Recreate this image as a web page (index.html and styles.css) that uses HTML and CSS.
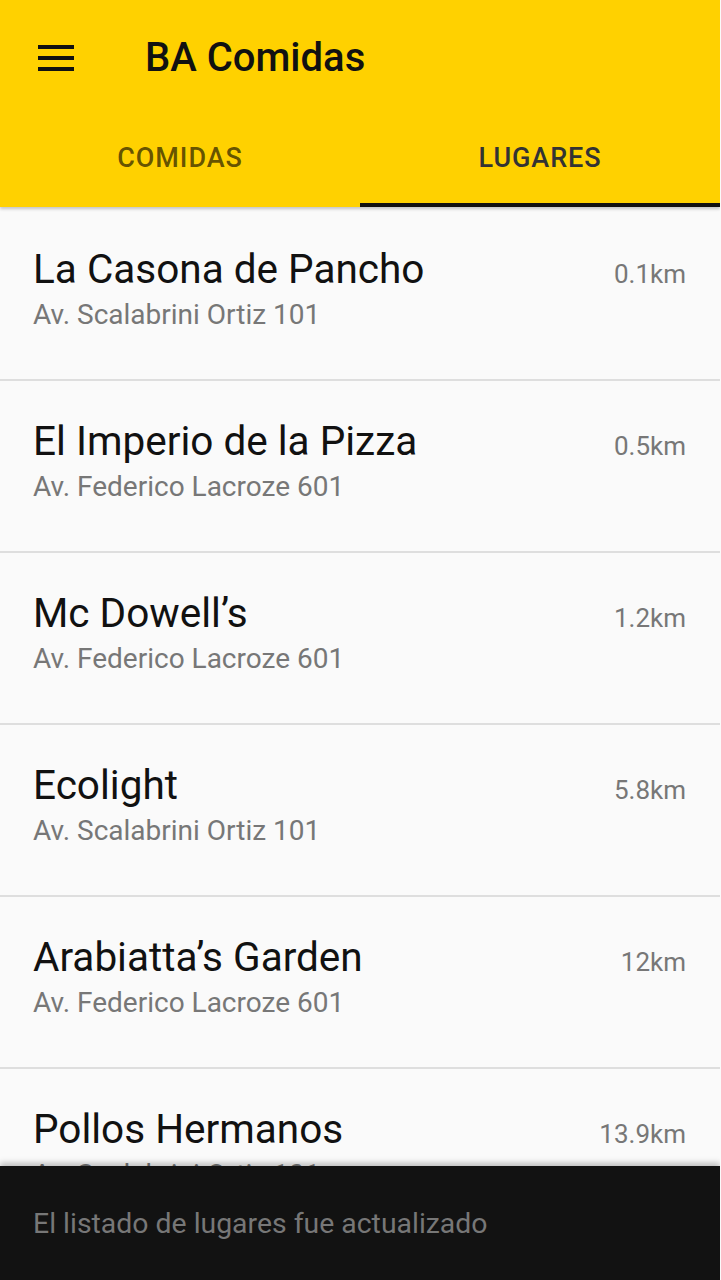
FILE: index.html
```html
<!DOCTYPE html>
<html lang="es">
<head>
<meta charset="utf-8">
<title>BA Comidas</title>
<link rel="stylesheet" href="styles.css">
</head>
<body>
<div class="screen">
  <header class="appbar">
    <div class="toolbar">
      <button class="menu-btn" aria-label="Menú">
        <svg width="36" height="26" viewBox="0 0 36 26"><rect x="0" y="0" width="36" height="4" fill="#111"/><rect x="0" y="11" width="36" height="4" fill="#111"/><rect x="0" y="22" width="36" height="4" fill="#111"/></svg>
      </button>
      <h1 class="title">BA Comidas</h1>
    </div>
    <nav class="tabs">
      <div class="tab">COMIDAS</div>
      <div class="tab active">LUGARES</div>
    </nav>
  </header>
  <ul class="list">
    <li class="item"><div class="row"><span class="name">La Casona de Pancho</span><span class="dist">0.1km</span></div><div class="addr">Av. Scalabrini Ortiz 101</div></li>
    <li class="item"><div class="row"><span class="name">El Imperio de la Pizza</span><span class="dist">0.5km</span></div><div class="addr">Av. Federico Lacroze 601</div></li>
    <li class="item"><div class="row"><span class="name">Mc Dowell’s</span><span class="dist">1.2km</span></div><div class="addr">Av. Federico Lacroze 601</div></li>
    <li class="item"><div class="row"><span class="name">Ecolight</span><span class="dist">5.8km</span></div><div class="addr">Av. Scalabrini Ortiz 101</div></li>
    <li class="item"><div class="row"><span class="name">Arabiatta’s Garden</span><span class="dist">12km</span></div><div class="addr">Av. Federico Lacroze 601</div></li>
    <li class="item"><div class="row"><span class="name">Pollos Hermanos</span><span class="dist">13.9km</span></div><div class="addr">Av. Scalabrini Ortiz 101</div></li>
  </ul>
  <div class="snackbar">El listado de lugares fue actualizado</div>
</div>
</body>
</html>
```
FILE: styles.css
```css
html, body {
  margin: 0;
  padding: 0;
  background: #fafafa;
}
body {
  font-family: Roboto, "Noto Sans", sans-serif;
  overflow: hidden;
  height: 1280px;
}
.screen {
  width: 720px;
  height: 1280px;
  position: relative;
  overflow: hidden;
  background: #fafafa;
}
.appbar {
  background: #ffd100;
  box-shadow: 0 2px 3px rgba(0,0,0,0.22);
  position: relative;
  z-index: 2;
}
.toolbar {
  height: 116px;
  display: flex;
  align-items: center;
}
.menu-btn {
  border: 0;
  background: none;
  padding: 0;
  margin-left: 38px;
  width: 36px;
  height: 26px;
  display: flex;
}
.title {
  margin: 0 0 0 71px;
  font-size: 40px;
  font-weight: 500;
  color: #111;
  line-height: 48px;
}
.tabs {
  display: flex;
  height: 91px;
}
.tab {
  flex: 1;
  display: flex;
  align-items: center;
  justify-content: center;
  font-size: 27px;
  font-weight: 500;
  letter-spacing: 0.9px;
  color: rgba(0,0,0,0.62);
  border-bottom: 4px solid transparent;
  padding-bottom: 3px;
}
.tab.active {
  color: #333;
  border-bottom-color: #111;
}
.list {
  list-style: none;
  margin: 0;
  padding: 2px 0 0;
}
.item {
  box-sizing: border-box;
  height: 172px;
  border-bottom: 2px solid #dedede;
  padding: 36px 34px 0 33px;
}
.row {
  display: flex;
  justify-content: space-between;
  align-items: baseline;
}
.name {
  font-size: 40.5px;
  color: #111;
  line-height: 48px;
}
.dist {
  font-size: 26px;
  color: #777;
}
.addr {
  font-size: 28px;
  color: #777;
  line-height: 44px;
}
.snackbar {
  position: absolute;
  left: 0;
  right: 0;
  bottom: 0;
  height: 114px;
  background: #121212;
  color: #777;
  font-size: 28.4px;
  display: flex;
  align-items: center;
  padding-left: 33px;
  box-shadow: 0 -3px 6px rgba(0,0,0,0.25);
}
```
